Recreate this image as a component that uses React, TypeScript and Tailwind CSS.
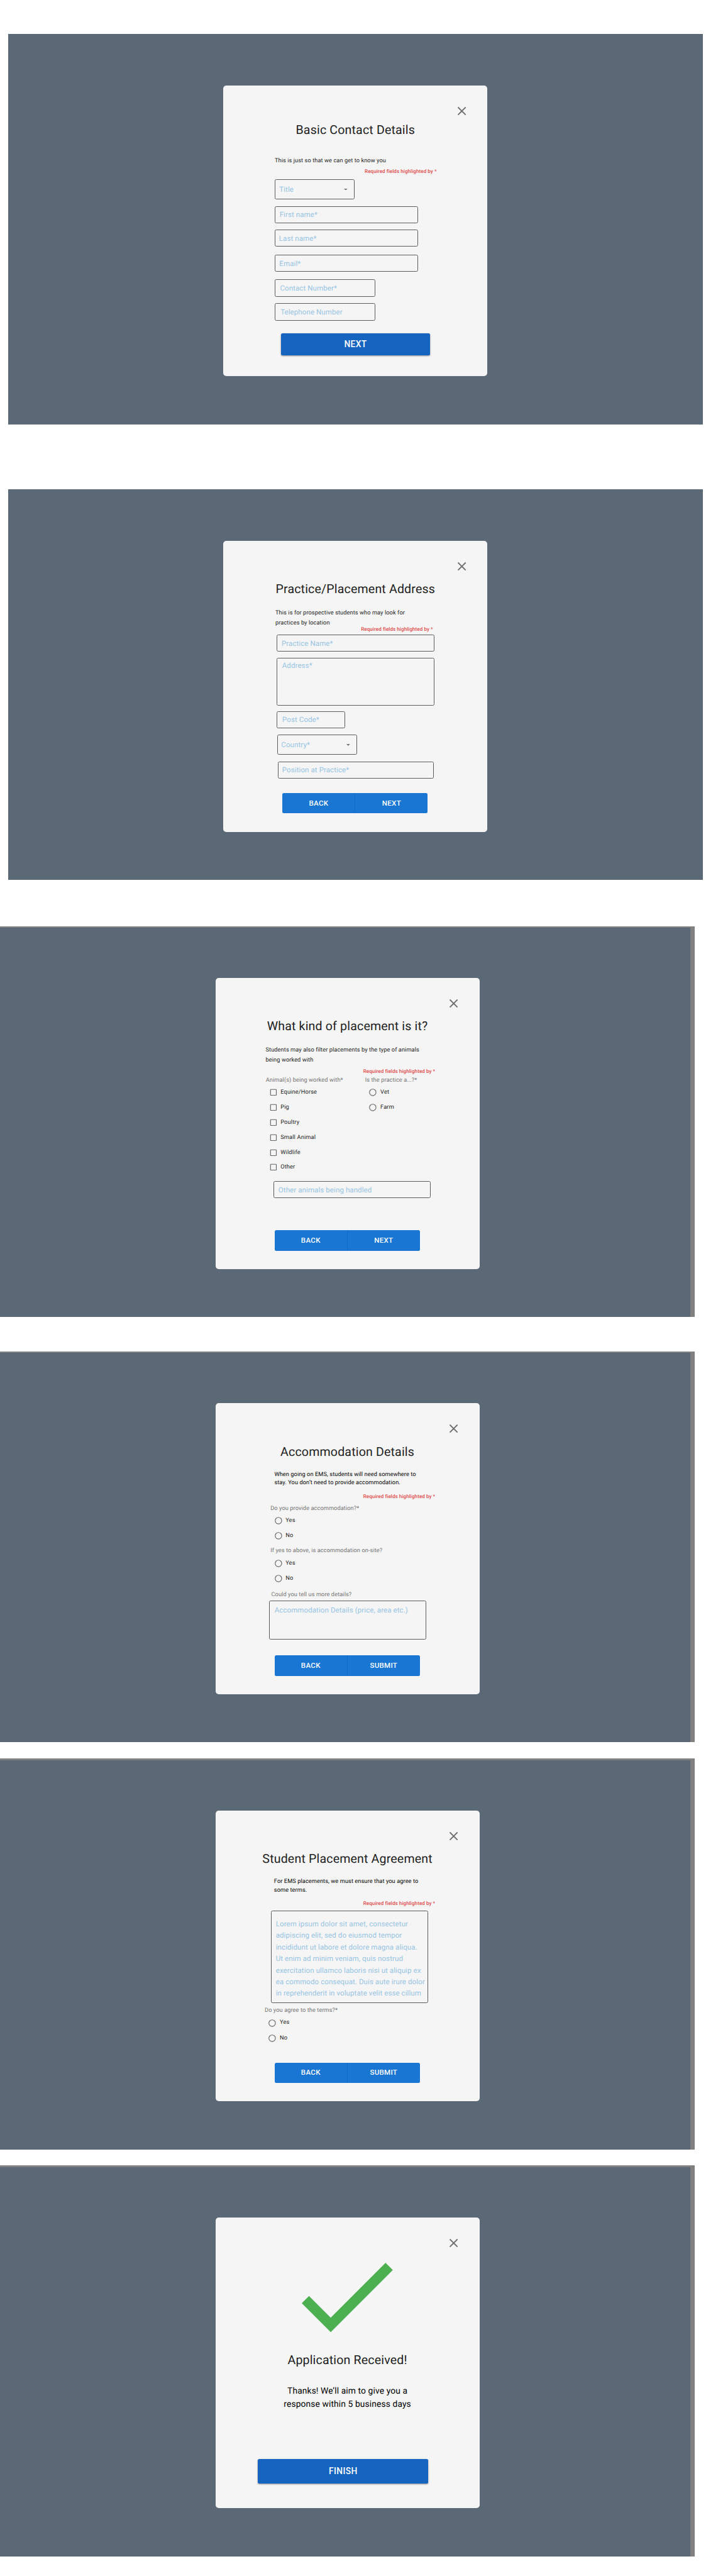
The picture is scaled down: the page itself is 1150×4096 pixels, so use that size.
import React from "react";

type WithClass = { className?: string };
type TextProps = { className?: string; children: React.ReactNode };

function CloseIcon() {
  return (
    <div className="flex justify-end pt-[29px] pr-[29.3px]">
      <svg viewBox="0 0 24 24" className="block h-[23.2px] w-[23.2px] fill-[#707070]">
        <path d="M19 6.41 17.59 5 12 10.59 6.41 5 5 6.41 10.59 12 5 17.59 6.41 19 12 13.41 17.59 19 19 17.59 13.41 12z" />
      </svg>
    </div>
  );
}

function Frame({ className = "", offset = false, children }: TextProps & { offset?: boolean }) {
  return (
    <section
      className={`${offset ? "bg-[#808080]" : "ml-[12.7px] bg-[#5a6975]"} h-[621.4px] w-[1105.1px] shrink-0 overflow-hidden ${className}`}
    >
      {offset ? (
        <div className="pt-[2.3px] pr-[7px]">
          <div className="h-[620px] bg-[#5a6975] pt-[80px] pl-[342.5px]">
            <Card>{children}</Card>
          </div>
        </div>
      ) : (
        <div className="flex justify-center pt-[82.3px]">
          <Card>{children}</Card>
        </div>
      )}
    </section>
  );
}

function Card({ children }: { children: React.ReactNode }) {
  return (
    <div className="flex h-[462.6px] w-[420.2px] flex-col items-start rounded-[5px] bg-[#f5f5f5]">
      <div className="w-full">
        <CloseIcon />
      </div>
      {children}
    </div>
  );
}

function Heading({ className = "mt-[12.1px]", children }: TextProps) {
  return (
    <h2
      className={`w-full text-center text-[19.57px] leading-[26px] tracking-[0.17px] whitespace-nowrap text-[#212121] ${className}`}
    >
      {children}
    </h2>
  );
}

function Intro({ className = "", children }: TextProps) {
  return <p className={`text-[9.21px] tracking-[0.095px] whitespace-nowrap ${className}`}>{children}</p>;
}

function Required({ className = "" }: WithClass) {
  return (
    <p
      className={`text-[8.06px] leading-[12px] font-medium tracking-[0.074px] whitespace-nowrap text-[#df4b4b] ${className}`}
    >
      Required fields highlighted by *
    </p>
  );
}

function Label({ className = "", children }: TextProps) {
  return (
    <p className={`text-[9.21px] leading-[14px] tracking-[0.095px] whitespace-nowrap text-[#737373] ${className}`}>
      {children}
    </p>
  );
}

const boxStyle =
  "rounded-[2.5px] border border-[#5c5c5c] text-[11.51px] tracking-[0.095px] whitespace-nowrap text-[#97c4e3]";

function Field({ className = "", children }: TextProps) {
  return <div className={`flex h-[27.4px] items-center leading-[16px] ${boxStyle} ${className}`}>{children}</div>;
}

function Select({ className = "", children }: TextProps) {
  return (
    <div className={`flex h-[32px] items-center justify-between pr-[10px] leading-[16px] ${boxStyle} ${className}`}>
      <span>{children}</span>
      <svg viewBox="0 0 10 5" className="h-[2.9px] w-[5.75px] fill-[#757575]">
        <path d="M0 0l5 5 5-5z" />
      </svg>
    </div>
  );
}

function Area({ className = "", children }: TextProps) {
  return <div className={`${boxStyle} ${className}`}>{children}</div>;
}

function Option({ kind, className = "h-[24.1px]", children }: TextProps & { kind: "check" | "radio" }) {
  return (
    <div className={`flex items-center gap-[4.8px] ${className}`}>
      <svg viewBox="0 0 24 24" className="block h-[13.8px] w-[13.8px] fill-none stroke-[#666666] stroke-2">
        {kind === "check" ? <rect x="4" y="4" width="16" height="16" rx="1" /> : <circle cx="12" cy="12" r="9" />}
      </svg>
      <span className="text-[9.21px] leading-[14px] tracking-[0.165px] whitespace-nowrap text-[#212121]">
        {children}
      </span>
    </div>
  );
}

function ButtonPair({ next, className = "" }: { next: string; className?: string }) {
  return (
    <div
      className={`ml-[94.3px] flex h-[32.3px] w-[231px] overflow-hidden rounded-[2.5px] bg-[#1976d2] text-[11.51px] font-medium tracking-[0.32px] text-white ${className}`}
    >
      <button className="flex-1 border-r border-[#176cc6]">BACK</button>
      <button className="flex-1">{next}</button>
    </div>
  );
}

function PrimaryButton({ className = "", children }: TextProps) {
  return (
    <button
      className={`rounded-[2.5px] bg-[#1565c0] text-[13.8px] font-medium tracking-[0.4px] text-white shadow-[0_1px_2.5px_rgba(0,0,0,0.45)] ${className}`}
    >
      {children}
    </button>
  );
}

export default function App() {
  return (
    <main className="flex h-[4096px] w-[1150px] flex-col items-start overflow-hidden bg-white font-[Roboto,sans-serif] [text-rendering:geometricPrecision]">
      <Frame className="mt-[53.5px]">
        <Heading className="mt-[6.1px]">Basic Contact Details</Heading>
        <Intro className="mt-[28.2px] ml-[81.8px] leading-[16px] text-[#212121]">
          This is just so that we can get to know you
        </Intro>
        <Required className="mt-[2.8px] ml-[224.9px]" />
        <Select className="mt-[5.9px] ml-[81.8px] w-[126.6px] pl-[6.3px]">Title</Select>
        <Field className="mt-[10.7px] ml-[81.8px] w-[227.9px] pl-[6.7px]">First name*</Field>
        <Field className="mt-[9.9px] ml-[81.8px] w-[227.9px] pl-[5.9px]">Last name*</Field>
        <Field className="mt-[12.7px] ml-[81.8px] w-[227.9px] pl-[6.4px]">Email*</Field>
        <Field className="mt-[11.8px] ml-[81.8px] w-[159.6px] pl-[7.5px]">Contact Number*</Field>
        <Field className="mt-[10.8px] ml-[81.8px] w-[159.6px] pl-[8.2px]">Telephone Number</Field>
        <PrimaryButton className="mt-[20.5px] ml-[91.5px] h-[35.1px] w-[237.8px]">NEXT</PrimaryButton>
      </Frame>

      <Frame className="mt-[103px]">
        <Heading>Practice/Placement Address</Heading>
        <Intro className="mt-[16.6px] ml-[82.9px] leading-[16.1px] text-[#212121]">
          This is for prospective students who may look for
          <br />
          practices by location
        </Intro>
        <Required className="mt-[-4.3px] ml-[219px]" />
        <Field className="mt-[2px] ml-[85.1px] w-[250.5px] pl-[6.7px]">Practice Name*</Field>
        <Area className="mt-[9.2px] ml-[85.1px] h-[76px] w-[250.5px] pt-[3px] pl-[7.5px] leading-[16px]">Address*</Area>
        <Field className="mt-[9.5px] ml-[85.1px] w-[108.8px] pb-[2px] pl-[7.8px]">Post Code*</Field>
        <Select className="mt-[9.7px] ml-[85.7px] w-[126.9px] pl-[5.5px]">Country*</Select>
        <Field className="mt-[10.6px] ml-[86.5px] w-[248.5px] pb-[1.5px] pl-[6.2px]">Position at Practice*</Field>
        <ButtonPair next="NEXT" className="mt-[23px]" />
      </Frame>

      <Frame offset className="mt-[73.6px]">
        <Heading>What kind of placement is it?</Heading>
        <Intro className="mt-[16.2px] ml-[80px] leading-[16.1px] text-[#212121]">
          Students may also filter placements by the type of animals
          <br />
          being worked with
        </Intro>
        <Required className="mt-[4.2px] ml-[235.2px]" />
        <div className="mt-[0.5px] flex items-start">
          <div className="w-[238.2px] pl-[80.2px]">
            <Label>Animal(s) being worked with*</Label>
            <div className="pl-[4.9px]">
              <Option kind="check">Equine/Horse</Option>
              <Option kind="check">Pig</Option>
              <Option kind="check">Poultry</Option>
              <Option kind="check">Small Animal</Option>
              <Option kind="check">Wildlife</Option>
              <Option kind="check" className="h-[22px]">
                Other
              </Option>
            </div>
          </div>
          <div>
            <Label>Is the practice a...?*</Label>
            <div className="pl-[5.8px]">
              <Option kind="radio">Vet</Option>
              <Option kind="radio">Farm</Option>
            </div>
          </div>
        </div>
        <Field className="mt-[11px] ml-[92.1px] w-[250.2px] pl-[7.2px]">Other animals being handled</Field>
        <ButtonPair next="NEXT" className="mt-[50.9px]" />
      </Frame>

      <Frame offset className="mt-[54.7px]">
        <Heading>Accommodation Details</Heading>
        <Intro className="mt-[16px] ml-[93.9px] leading-[13.8px] text-black">
          When going on EMS, students will need somewhere to
          <br />
          stay. You don’t need to provide accommodation.
        </Intro>
        <Required className="mt-[8.9px] ml-[235.2px]" />
        <Label className="mt-[5.6px] ml-[87.7px]">Do you provide accommodation?*</Label>
        <div className="pl-[93.1px]">
          <Option kind="radio">Yes</Option>
          <Option kind="radio">No</Option>
        </div>
        <Label className="mt-[5.7px] ml-[87.7px]">If yes to above, is accommodation on-site?</Label>
        <div className="pl-[93.1px]">
          <Option kind="radio">Yes</Option>
          <Option kind="radio">No</Option>
        </div>
        <Label className="mt-[6.9px] ml-[89px]">Could you tell us more details?</Label>
        <Area className="mt-[2.5px] ml-[85.1px] h-[62px] w-[250.2px] pt-[5.5px] pl-[8.1px] leading-[16px]">
          Accommodation Details (price, area etc.)
        </Area>
        <ButtonPair next="SUBMIT" className="mt-[25.2px]" />
      </Frame>

      <Frame offset className="mt-[25.9px]">
        <Heading>Student Placement Agreement</Heading>
        <Intro className="mt-[16px] ml-[93.3px] leading-[13.8px] text-black">
          For EMS placements, we must ensure that you agree to
          <br />
          some terms.
        </Intro>
        <Required className="mt-[8.9px] ml-[235.2px]" />
        <Area className="mt-[4.7px] ml-[88.2px] h-[146.7px] w-[249.9px] pt-[10.9px] pl-[7px] leading-[18.4px]">
          Lorem ipsum dolor sit amet, consectetur
          <br />
          adipiscing elit, sed do eiusmod tempor
          <br />
          incididunt ut labore et dolore magna aliqua.
          <br />
          Ut enim ad minim veniam, quis nostrud
          <br />
          exercitation ullamco laboris nisi ut aliquip ex
          <br />
          ea commodo consequat. Duis aute irure dolor
          <br />
          in reprehenderit in voluptate velit esse cillum
        </Area>
        <Label className="mt-[5.7px] ml-[78.5px]">Do you agree to the terms?*</Label>
        <div className="pl-[83.9px]">
          <Option kind="radio">Yes</Option>
          <Option kind="radio">No</Option>
        </div>
        <ButtonPair next="SUBMIT" className="mt-[27.1px]" />
      </Frame>

      <Frame offset className="mt-[25.8px]">
        <svg viewBox="3.4 5.6 17.6 13.4" className="mt-[20.4px] ml-[137.8px] block h-[110.3px] w-[144.8px] fill-[#4caf50]">
          <path d="M9 16.2 4.8 12l-1.4 1.4L9 19 21 7l-1.4-1.4z" />
        </svg>
        <Heading className="mt-[31.2px]">Application Received!</Heading>
        <p className="mt-[26.4px] w-full text-center text-[13.81px] leading-[20.8px] tracking-[0.12px] text-black">
          Thanks! We’ll aim to give you a
          <br />
          response within 5 business days
        </p>
        <PrimaryButton className="mt-[76.3px] ml-[67.8px] h-[39.1px] w-[271.1px]">FINISH</PrimaryButton>
      </Frame>
    </main>
  );
}
